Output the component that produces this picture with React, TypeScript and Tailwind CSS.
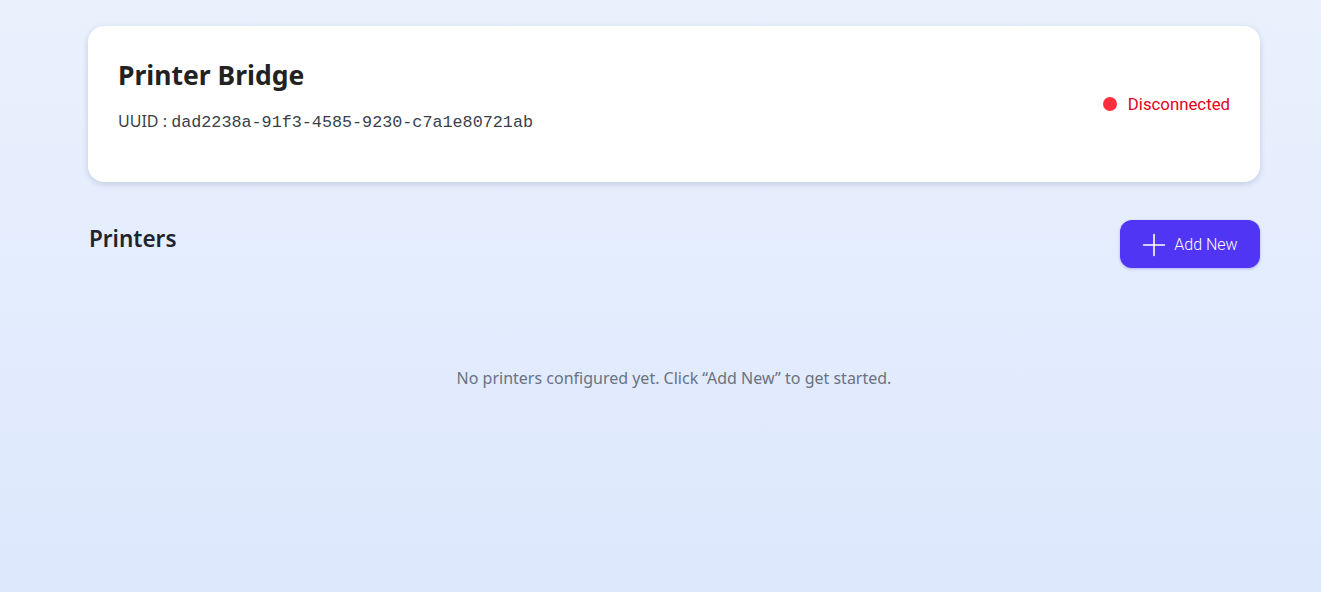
import React from "react";

const PlusIcon = () => (
    <svg width="24" height="24" viewBox="0 0 24 24" fill="none" stroke="currentColor" strokeWidth="1.6" strokeLinecap="round">
        <path d="M12 1.5v21M1.5 12h21" />
    </svg>
);

const App = () => {
    return (
        <div className="min-h-[592px] w-full bg-gradient-to-b from-[#eaf1fd] to-[#dde8fd] pl-[88px] pr-[61px] pt-[26px] font-['Noto_Sans',sans-serif]">

            {/* BRIDGE INFO CARD */}
            <div className="flex h-[156px] items-start justify-between rounded-[16px] bg-white px-[30px] pt-[31px] shadow-[0_2px_6px_rgba(30,50,100,0.18)]">
                <div>
                    <h1 className="text-[26.5px] font-bold leading-[36px] text-[#222222]">Printer Bridge</h1>
                    <p className="mt-[16px] text-[16px] leading-[24px] text-[#3a3f4a]">
                        UUID :{" "}
                        <span className="font-['Liberation_Mono',monospace] text-[16.75px]">dad2238a-91f3-4585-9230-c7a1e80721ab</span>
                    </p>
                </div>
                <div className="mt-[35px] flex items-center gap-[11px] font-['Roboto',sans-serif] text-[16.8px] leading-[24px] text-[#e4001b]">
                    <span className="h-[14px] w-[14px] rounded-full bg-[#ff2e3d]" />
                    Disconnected
                </div>
            </div>

            {/* PRINTERS HEADER */}
            <div className="mt-[38px] flex items-start justify-between">
                <h2 className="ml-[1px] mt-[2px] text-[22.5px] font-semibold text-[#1f2530]">Printers</h2>
                <button className="flex h-[48px] w-[140px] items-center justify-center gap-[8px] rounded-[12px] bg-[#5035f4] pt-[2px] font-['Roboto',sans-serif] text-[16px] font-light text-white shadow-[0_1px_3px_rgba(60,40,200,0.3)]">
                    <PlusIcon />
                    Add New
                </button>
            </div>

            {/* EMPTY STATE */}
            <p className="mt-[98px] text-center text-[16px] text-[#6b7280]">
                No printers configured yet. Click “Add New” to get started.
            </p>

        </div>
    );
};

export default App;
